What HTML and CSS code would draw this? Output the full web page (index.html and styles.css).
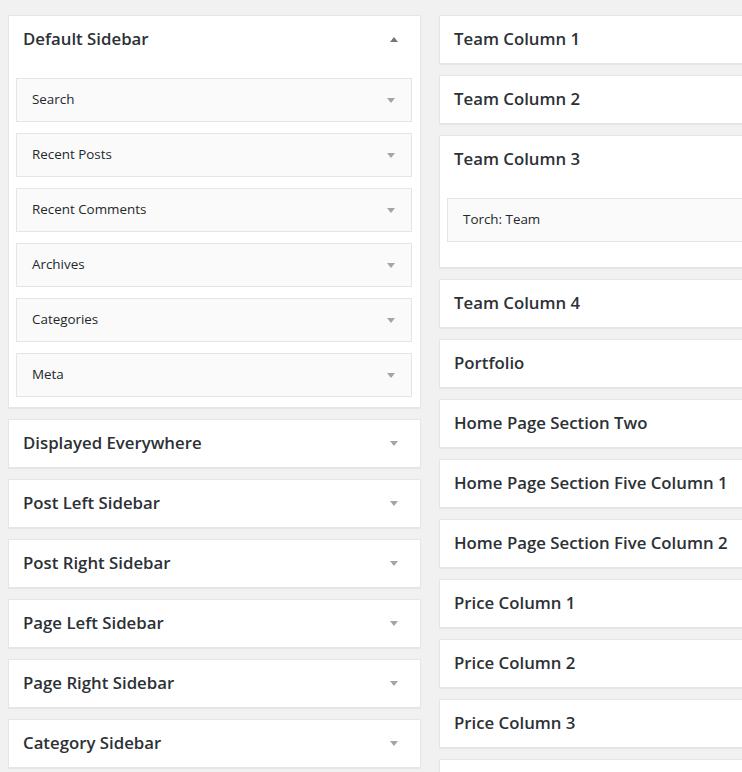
FILE: index.html
```html
<!DOCTYPE html>
<html lang="en">
<head>
<meta charset="utf-8">
<title>Widgets</title>
<link rel="stylesheet" href="styles.css">
</head>
<body>
<div class="widgets">
  <div class="col">
    <div class="sidebar open">
      <div class="sidebar-name"><h2>Default Sidebar</h2><span class="arrow up"></span></div>
      <div class="sidebar-body">
        <div class="widget"><h3>Search</h3><span class="arrow"></span></div>
        <div class="widget"><h3>Recent Posts</h3><span class="arrow"></span></div>
        <div class="widget"><h3>Recent Comments</h3><span class="arrow"></span></div>
        <div class="widget"><h3>Archives</h3><span class="arrow"></span></div>
        <div class="widget"><h3>Categories</h3><span class="arrow"></span></div>
        <div class="widget"><h3>Meta</h3><span class="arrow"></span></div>
      </div>
    </div>
    <div class="sidebar"><div class="sidebar-name"><h2>Displayed Everywhere</h2><span class="arrow"></span></div></div>
    <div class="sidebar"><div class="sidebar-name"><h2>Post Left Sidebar</h2><span class="arrow"></span></div></div>
    <div class="sidebar"><div class="sidebar-name"><h2>Post Right Sidebar</h2><span class="arrow"></span></div></div>
    <div class="sidebar"><div class="sidebar-name"><h2>Page Left Sidebar</h2><span class="arrow"></span></div></div>
    <div class="sidebar"><div class="sidebar-name"><h2>Page Right Sidebar</h2><span class="arrow"></span></div></div>
    <div class="sidebar"><div class="sidebar-name"><h2>Category Sidebar</h2><span class="arrow"></span></div></div>
  </div>
  <div class="col">
    <div class="sidebar"><div class="sidebar-name"><h2>Team Column 1</h2><span class="arrow"></span></div></div>
    <div class="sidebar"><div class="sidebar-name"><h2>Team Column 2</h2><span class="arrow"></span></div></div>
    <div class="sidebar open">
      <div class="sidebar-name"><h2>Team Column 3</h2><span class="arrow up"></span></div>
      <div class="sidebar-body tall">
        <div class="widget"><h3>Torch: Team</h3><span class="arrow"></span></div>
      </div>
    </div>
    <div class="sidebar"><div class="sidebar-name"><h2>Team Column 4</h2><span class="arrow"></span></div></div>
    <div class="sidebar"><div class="sidebar-name"><h2>Portfolio</h2><span class="arrow"></span></div></div>
    <div class="sidebar"><div class="sidebar-name"><h2>Home Page Section Two</h2><span class="arrow"></span></div></div>
    <div class="sidebar"><div class="sidebar-name"><h2>Home Page Section Five Column 1</h2><span class="arrow"></span></div></div>
    <div class="sidebar"><div class="sidebar-name"><h2>Home Page Section Five Column 2</h2><span class="arrow"></span></div></div>
    <div class="sidebar"><div class="sidebar-name"><h2>Price Column 1</h2><span class="arrow"></span></div></div>
    <div class="sidebar"><div class="sidebar-name"><h2>Price Column 2</h2><span class="arrow"></span></div></div>
    <div class="sidebar"><div class="sidebar-name"><h2>Price Column 3</h2><span class="arrow"></span></div></div>
    <div class="sidebar"><div class="sidebar-name"></div></div>
  </div>
</div>
</body>
</html>
```

FILE: styles.css
```css
html, body {
  margin: 0;
  padding: 0;
  background: #f1f1f1;
  overflow: hidden;
  width: 742px;
  height: 772px;
}

body {
  font-family: "Open Sans", "Noto Sans", sans-serif;
  color: #23282d;
}

.widgets {
  display: flex;
  gap: 18px;
  padding: 15px 0 0 8px;
  width: 900px;
}

.col {
  width: 413px;
  flex-shrink: 0;
}

.sidebar {
  background: #fff;
  border: 1px solid #e5e5e5;
  box-shadow: 0 1px 1px rgba(0, 0, 0, 0.04);
  margin-bottom: 11px;
}

.sidebar-name {
  height: 47px;
  box-sizing: border-box;
  display: flex;
  align-items: center;
  justify-content: space-between;
  padding: 0 22px 0 14px;
}

.sidebar-name h2 {
  margin: 0;
  font-size: 16.8px;
  font-weight: 600;
  letter-spacing: 0;
  line-height: 1;
  color: #2c3136;
}

.sidebar-body {
  padding: 15px 8px 10px 7px;
}

.sidebar-body.tall {
  padding-bottom: 25px;
}

.widget {
  height: 42px;
  background: #fafafa;
  border: 1px solid #e5e5e5;
  display: flex;
  align-items: center;
  justify-content: space-between;
  padding: 0 16px 0 15px;
  margin-bottom: 11px;
}

.widget:last-child {
  margin-bottom: 0;
}

.widget h3 {
  margin: 0;
  font-size: 13.4px;
  font-weight: 400;
  line-height: 1;
}

.arrow {
  width: 0;
  height: 0;
  border-left: 4px solid transparent;
  border-right: 4px solid transparent;
  border-top: 5px solid #a0a5aa;
}

.arrow.up {
  border-top: 0;
  border-bottom: 5px solid #72777c;
}
```
